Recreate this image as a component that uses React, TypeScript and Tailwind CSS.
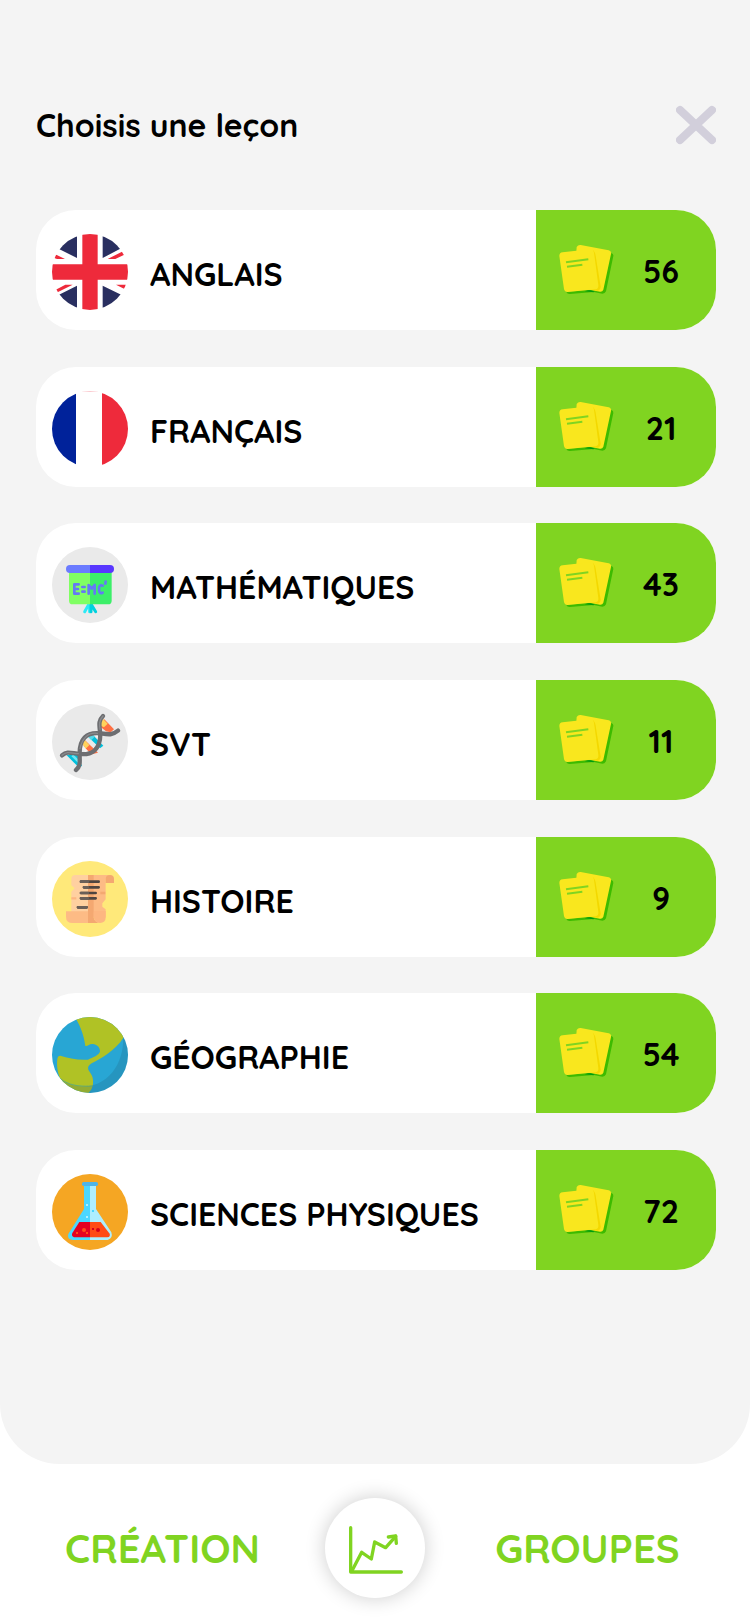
import React from "react";

function EnglishIcon() {
  return (
    <svg viewBox="36 33 228 228" className="h-full w-full" aria-hidden="true">
      <clipPath id="uk-clip">
        <circle cx="150" cy="147" r="114" />
      </clipPath>
      <g clipPath="url(#uk-clip)">
        <rect x="36" y="33" width="228" height="228" fill="#fff" />
        <path
          d="M111 33V105L57 78V33ZM188 33V105L245 75V33ZM111 261V188L57 215V261ZM188 261V188L245 216V261Z"
          fill="#292f60"
        />
        <path
          d="M36 89L75 108H51L36 103ZM203 108L264 77V90L226 108ZM36 206L76 185H98L36 216ZM228 185H264V203Z"
          fill="#ee2a3b"
        />
        <path d="M127 33H173V124H264V170H173V261H127V170H36V124H127Z" fill="#ee2a3b" />
      </g>
    </svg>
  );
}

function FrenchIcon() {
  return (
    <svg viewBox="36 30 228 228" className="h-full w-full" aria-hidden="true">
      <clipPath id="fr-clip">
        <circle cx="150" cy="144" r="114" />
      </clipPath>
      <g clipPath="url(#fr-clip)">
        <rect x="36" y="30" width="228" height="228" fill="#fff" />
        <rect x="36" y="30" width="72" height="228" fill="#00229a" />
        <rect x="186" y="30" width="78" height="228" fill="#ee2a3b" />
        <rect x="108" y="30" width="78" height="3" fill="#fbc9ce" />
      </g>
    </svg>
  );
}

function MathIcon() {
  return (
    <svg viewBox="36 33 228 228" className="h-full w-full" aria-hidden="true">
      <circle cx="150" cy="147" r="114" fill="#eaeaea" />
      <path d="M147 204L134 227M149 204V227" stroke="#2beaf6" strokeWidth="9" strokeLinecap="round" />
      <path d="M153 204L167 227M153 206V227" stroke="#00d1de" strokeWidth="9" strokeLinecap="round" />
      <path d="M87 105H150V205H98Q87 205 87 194Z" fill="#80ff63" />
      <path d="M150 105H215V194Q215 205 204 205H150Z" fill="#3cef69" />
      <path d="M150 87H90Q78 87 78 99Q78 111 90 111H150Z" fill="#6b7bff" />
      <path d="M150 87H210Q222 87 222 99Q222 111 210 111H150Z" fill="#5937ff" />
      <g fill="none" stroke="#6579f4" strokeWidth="8" strokeLinecap="round" strokeLinejoin="round">
        <path d="M116 145H103V173H116M103 159H114" />
        <path d="M127 153H134M127 167H134" />
        <path d="M146 173V147L155 158L164 147V173" />
        <path d="M188 149Q177 144 177 159Q177 175 188 170" />
        <path d="M197 137L196 143" />
      </g>
    </svg>
  );
}

function BiologyIcon() {
  return (
    <svg viewBox="36 36 228 228" className="h-full w-full" aria-hidden="true">
      <circle cx="150" cy="150" r="114" fill="#eaeaea" />
      <path d="M80 190L120 181Q118 204 126 222L116 226Z" fill="#00bfdb" />
      <path d="M97 190L116 209" stroke="#6ee5f2" strokeWidth="8" />
      <path d="M124 150L132 142L174 182L150 188Z" fill="#ff7043" />
      <path d="M122 147L131 141L148 159L137 170Z" fill="#ffd35c" />
      <path d="M120 160L149 187" stroke="#f4f4f4" strokeWidth="8" />
      <path d="M140 130L151 121L190 161L180 169Z" fill="#00bfdb" />
      <path d="M140 130L152 122L164 134L154 145Z" fill="#58d8e8" />
      <path d="M162 122L178 135" stroke="#f4f4f4" strokeWidth="10" />
      <path d="M184 88L193 82L222 112L212 121L198 118L183 106Z" fill="#ff7043" />
      <path d="M183 88L190 82L203 95L192 106L182 101Z" fill="#ffd35c" />
      <g fill="none" stroke="#6d6e71" strokeWidth="13" strokeLinecap="round">
        <path d="M66 190C82 176 94 184 119 186C154 190 181 174 181 127" />
        <path d="M108 234C124 222 118 205 119 183C119 143 138 119 181 124C207 128 217 130 234 116" />
        <path d="M181 127C178 98 174 87 189 72" />
      </g>
      <path
        d="M66 190C82 176 94 184 115 185M120 170C126 139 145 120 172 124M180 112C178 98 176 87 189 72"
        fill="none"
        stroke="#8a8b8e"
        strokeWidth="4"
        strokeLinecap="round"
      />
    </svg>
  );
}

function HistoryIcon() {
  return (
    <svg viewBox="36 36 228 228" className="h-full w-full" aria-hidden="true">
      <circle cx="150" cy="150" r="114" fill="#ffe97a" />
      <path d="M144 78H210L197 90V151L187 163V173L197 181V205H144Z" fill="#fdbb85" />
      <path d="M144 78H106Q94 78 94 90V109L104 118L94 128V192H144Z" fill="#ffd0a0" />
      <path d="M144 78H161V190H144Z" fill="#f4a871" />
      <path d="M210 78Q222 78 222 90V102H197V91Q197 78 210 78Z" fill="#f4a871" />
      <path d="M94 148H109" stroke="#fdb681" strokeWidth="7" />
      <path d="M181 132H196" stroke="#f4a871" strokeWidth="7" />
      <path d="M78 187H144V222H98Q78 222 78 203Z" fill="#fdbb85" />
      <path d="M144 187H161V206Q164 218 177 222H144Z" fill="#f4a871" />
      <path d="M161 186H197V205Q197 222 180 222Q162 222 161 202Z" fill="#fdb681" />
      <path
        d="M123 98H176M132 115H176M123 132H167M123 148H167M114 175H140"
        stroke="#4f4440"
        strokeWidth="8"
        strokeLinecap="round"
      />
      <path d="M123 98H144M132 115H144M123 132H144M123 148H144M114 175H140" stroke="#6b5f58" strokeWidth="8" strokeLinecap="round" />
    </svg>
  );
}

function GeographyIcon() {
  return (
    <svg viewBox="36 33 228 228" className="h-full w-full" aria-hidden="true">
      <clipPath id="globe-clip">
        <circle cx="150" cy="147" r="114" />
      </clipPath>
      <g clipPath="url(#globe-clip)">
        <rect x="36" y="33" width="228" height="228" fill="#28a6d4" />
        <path
          d="M105 33C125 68 132 91 136 120C144 122 147 113 158 114C171 115 180 124 180 136C178 148 158 155 144 161C112 163 84 156 61 149Q53 149 52 159C49 181 54 211 66 226L90 261H145Q158 248 159 233C161 213 154 205 145 191Q141 180 155 172C181 158 226 134 250 95V33Z"
          fill="#b0c225"
        />
        <path
          d="M248 86C257 153 216 240 131 241C104 242 82 234 62 220V261H264V86Z"
          fill="#1d566c"
          opacity="0.2"
        />
        <path d="M60 217C86 239 119 242 158 240" fill="none" stroke="#42a39b" strokeWidth="2" />
      </g>
    </svg>
  );
}

function PhysicsIcon() {
  return (
    <svg viewBox="36 36 228 228" className="h-full w-full" aria-hidden="true">
      <circle cx="150" cy="150" r="114" fill="#f5a623" />
      <path d="M132 70H150V234H98Q80 232 85 216L132 141Z" fill="#4bd7ff" />
      <path d="M150 70H168V141L214 211Q220 229 203 234H150Z" fill="#aeeeff" />
      <path d="M118 180H150V226H102Q93 222 97 213Z" fill="#e4001f" />
      <path d="M150 180H182L209 215Q212 224 202 226H150Z" fill="#ff4b16" />
      <rect x="126" y="60" width="48" height="12" rx="5" fill="#4eb4e8" />
      <circle cx="132" cy="204" r="6" fill="#ff4b16" />
      <circle cx="174" cy="204" r="6" fill="#d5001c" />
      <path d="M108 210H114V216H108ZM138 210H144V216H138Z" fill="#ff4b16" />
      <path d="M156 198H162V204H156Z" fill="#d5001c" />
      <path d="M138 126H144V132H138ZM138 162H144V168H138Z" fill="#aeeeff" />
      <path d="M156 144H162V150H156Z" fill="#4bd7ff" />
    </svg>
  );
}

function CardsIcon() {
  return (
    <svg viewBox="24 24 168 168" className="h-14 w-14 shrink-0" aria-hidden="true">
      <path d="M184 54Q191 56 190 63L168 169Q165 176 157 176L131 171L60 177Q52 178 49 171L120 164Z" fill="#3dbb00" />
      <path d="M104 169Q120 162 134 170L131 172Z" fill="#009b10" />
      <path d="M92 30L176 46Q185 49 183 57L160 164Q157 171 150 170L72 155L80 36Q84 29 92 30Z" fill="#f9e71e" />
      <path d="M128 46Q134 48 137 62L152 155Q151 165 143 167L120 163Z" fill="#f3d800" />
      <path d="M38 52L120 43Q130 43 132 53L145 150Q146 161 137 163L53 171Q44 171 42 162L28 63Q28 53 38 52Z" fill="#f9e71e" />
      <path d="M48 82L115 73M51 95L97 89" stroke="#80d421" strokeWidth="6" />
    </svg>
  );
}

const lessons = [
  { name: "ANGLAIS", count: 56, icon: <EnglishIcon /> },
  { name: "FRANÇAIS", count: 21, icon: <FrenchIcon /> },
  { name: "MATHÉMATIQUES", count: 43, icon: <MathIcon /> },
  { name: "SVT", count: 11, icon: <BiologyIcon /> },
  { name: "HISTOIRE", count: 9, icon: <HistoryIcon /> },
  { name: "GÉOGRAPHIE", count: 54, icon: <GeographyIcon /> },
  { name: "SCIENCES PHYSIQUES", count: 72, icon: <PhysicsIcon /> },
];

export default function App() {
  return (
    <div className="flex min-h-screen flex-col bg-white font-['Quicksand','Lato',sans-serif] font-bold text-black">
      <main className="flex-1 rounded-b-[60px] bg-[#f4f4f4] pt-[105px] pr-[34px] pb-10 pl-9">
        <header className="flex h-10 items-center justify-between">
          <h1 className="text-[32px] leading-10">Choisis une leçon</h1>
          <button type="button" aria-label="Fermer">
            <svg viewBox="0 0 40 40" className="h-10 w-10" aria-hidden="true">
              <path d="M4 5L36 35M36 5L4 35" stroke="#d2cfdb" strokeWidth="8" strokeLinecap="round" />
            </svg>
          </button>
        </header>

        <ul className="mt-[65px] flex min-h-[1060px] flex-col justify-between">
          {lessons.map((lesson) => (
            <li key={lesson.name}>
              <button
                type="button"
                className="flex h-[120px] w-full overflow-hidden rounded-[40px] bg-white text-left"
              >
                <span className="flex h-full flex-1 items-center gap-[22px] pt-1 pl-4">
                  <span className="h-[76px] w-[76px] shrink-0">{lesson.icon}</span>
                  <span className="pt-1 text-[32px] leading-10">{lesson.name}</span>
                </span>
                <span className="flex h-full w-[180px] items-center bg-[#80d421] pt-0.5 pr-2 pl-[22px]">
                  <CardsIcon />
                  <span className="flex-1 text-center text-[32px] leading-10">{lesson.count}</span>
                </span>
              </button>
            </li>
          ))}
        </ul>
      </main>

      <nav className="grid grid-cols-[1fr_100px_1fr] items-center pt-[34px] pb-[26px] text-[40px] leading-12 text-[#80d421]">
        <button type="button">CRÉATION</button>
        <button
          type="button"
          aria-label="Progression"
          className="h-[100px] w-[100px] rounded-full bg-white shadow-[0_0_20px_rgba(0,0,0,0.2)]"
        >
          <svg viewBox="48 54 300 300" className="h-full w-full" fill="none" aria-hidden="true">
            <g stroke="#80d421" strokeWidth="10" strokeLinecap="round" strokeLinejoin="round">
              <path d="M125 143V276H277" />
              <path d="M129 272L158 217L187 237L197 186L230 203L260 169" />
              <path d="M238 171L260 168L262 190" />
            </g>
          </svg>
        </button>
        <button type="button">GROUPES</button>
      </nav>
    </div>
  );
}
